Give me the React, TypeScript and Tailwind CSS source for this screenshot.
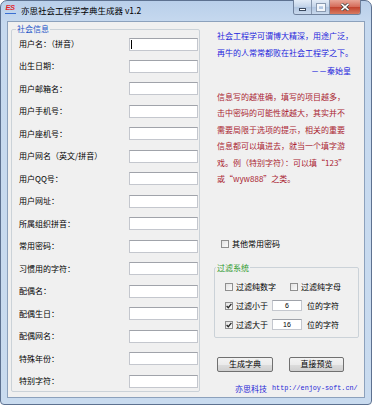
import React from "react";

const font = "font-['Noto_Sans_CJK_SC','Noto_Sans',sans-serif]";

function TextBox({ caret }: { caret?: boolean }) {
  return (
    <div className="relative h-[13px] w-[69px] shrink-0 bg-white border border-[#c4c7ce] border-t-[#a0a3aa]">
      {caret && <span className="absolute left-[1px] top-[1px] h-[9px] w-px bg-black" />}
    </div>
  );
}

function Check({ checked }: { checked?: boolean }) {
  return (
    <span className="flex h-[8px] w-[8px] shrink-0 items-center justify-center border border-[#8f8f8f] bg-[linear-gradient(135deg,#e2e2e2,#fbfbfb)]">
      {checked && (
        <svg width="6" height="6" viewBox="0 0 6 6">
          <path d="M0.6 3 L2.3 4.7 L5.4 0.9" stroke="#262626" strokeWidth="1.3" fill="none" />
        </svg>
      )}
    </span>
  );
}

const labels = [
  "用户名：（拼音）",
  "出生日期：",
  "用户邮箱名：",
  "用户手机号：",
  "用户座机号：",
  "用户网名（英文/拼音）",
  "用户QQ号：",
  "用户网址：",
  "所属组织拼音：",
  "常用密码：",
  "习惯用的字符：",
  "配偶名：",
  "配偶生日：",
  "配偶网名：",
  "特殊年份：",
  "特别字符：",
];

const redLines = [
  "信息写的越准确，填写的项目越多，",
  "击中密码的可能性就越大，其实并不",
  "需要局限于选项的提示，相关的重要",
  "信息都可以填进去，就当一个填字游",
  "戏。例（特别字符）：可以填“123”",
  "或“wyw888”之类。",
];

export default function App() {
  return (
    <div className="h-[405px] w-[372px] bg-white">
      <div
        className={`flex h-[405px] w-[372px] flex-col rounded-t-[7px] rounded-b-[4px] border border-[#5d7190] bg-[linear-gradient(180deg,#b9cfea_0px,#c6d9ef_22px,#c9dbef_100%)] ${font}`}
      >
        {/* Title bar */}
        <div className="flex h-[20px] shrink-0 items-start">
          <div className="ml-[3px] mt-[3px] flex h-[11px] w-[12px] flex-col items-center">
            <span className="text-[7.5px] font-bold italic leading-[8px] tracking-[-0.6px] text-[#e3262b] font-['Liberation_Sans',sans-serif]">
              ES
            </span>
            <span className="mt-[1px] h-px w-[11px] bg-[#3a6fd2]" />
          </div>
          <div className="ml-[5px] mt-[4px] text-[8.5px] leading-[11px] text-black">
            亦思社会工程学字典生成器 v1.2
          </div>
          <div className="ml-auto mr-[10px] -mt-px flex h-[15px] overflow-hidden rounded-b-[3px] border border-t-0 border-[#6f809b]">
            <div className="flex w-[18px] items-end justify-center border-r border-[#8696ae] bg-[linear-gradient(180deg,#e3ecf7,#c2d3e8_50%,#b0c5e0_51%,#c9d9ed)] pb-[3px]">
              <span className="h-[3px] w-[7px] border border-[#3b4a60] bg-white" />
            </div>
            <div className="flex w-[18px] items-center justify-center border-r border-[#8696ae] bg-[linear-gradient(180deg,#e3ecf7,#c2d3e8_50%,#b0c5e0_51%,#c9d9ed)]">
              <span className="h-[7px] w-[8px] border-2 border-white/80 outline outline-1 outline-[#8a9ab0]" />
            </div>
            <div className="flex w-[30px] items-center justify-center bg-[linear-gradient(180deg,#e8a697,#d46a58_50%,#c2422d_51%,#d77b62)]">
              <svg width="10" height="8" viewBox="0 0 10 8">
                <path d="M1.5 0.8 L8.5 7.2 M8.5 0.8 L1.5 7.2" stroke="#3a3a3a" strokeWidth="3" />
                <path d="M1.5 0.8 L8.5 7.2 M8.5 0.8 L1.5 7.2" stroke="#ffffff" strokeWidth="1.6" />
              </svg>
            </div>
          </div>
        </div>

        {/* Client area */}
        <div className="mx-[6px] mb-[6px] flex flex-1 border border-[#8ca1bc] bg-[#f0f0f0] text-[8px] text-black">
          {/* Left group */}
          <fieldset className="ml-[3px] mt-[2px] w-[189px] self-start rounded-[2px] border border-[#cbd2d8] pl-[7px] pr-[1px]">
            <legend className="-ml-[3px] px-[1px] text-[8px] leading-[10px] text-[#1f56c9]">
              社会信息
            </legend>
            <div className="flex flex-col gap-[2.47px]">
              {labels.map((l, i) => (
                <div key={l} className="flex h-[20px] items-center justify-between">
                  <span className="leading-none">{l}</span>
                  <TextBox caret={i === 0} />
                </div>
              ))}
            </div>
          </fieldset>

          {/* Right column */}
          <div className="flex flex-1 flex-col">
            <div className="ml-[17px] mt-[6px] text-[8px] leading-[16.5px] text-[#2424dc]">
              <div>社会工程学可谓博大精深，用途广泛，</div>
              <div>再牛的人常常都败在社会工程学之下。</div>
              <div className="mr-[13px] mt-[2px] text-right">－－秦始皇</div>
            </div>

            <div className="ml-[17px] mt-[9px] text-[8px] leading-[16.5px] text-[#aa2430]">
              {redLines.map((l) => (
                <div key={l} className="whitespace-nowrap">
                  {l}
                </div>
              ))}
            </div>

            <div className="ml-[21px] mt-[51px] flex h-[10px] items-center gap-[3px]">
              <Check />
              <span className="leading-none">其他常用密码</span>
            </div>

            <fieldset className="ml-[14px] mt-[14px] w-[145px] rounded-[2px] border border-[#cbd2d8] pb-[5px] pl-[10px] pt-[7px]">
              <legend className="-ml-[9px] px-[1px] text-[8px] leading-[10px] text-[#2e9a2e]">
                过滤系统
              </legend>
              <div className="flex flex-col gap-[5px]">
                <div className="flex h-[14px] items-center">
                  <div className="flex w-[65px] items-center gap-[3px]">
                    <Check />
                    <span className="leading-none">过滤纯数字</span>
                  </div>
                  <div className="flex items-center gap-[3px]">
                    <Check />
                    <span className="leading-none">过滤纯字母</span>
                  </div>
                </div>
                <div className="flex h-[14px] items-center">
                  <Check checked />
                  <span className="ml-[3px] leading-none">过滤小于</span>
                  <div className="ml-[4px] flex h-[11px] w-[30px] items-center justify-center border border-[#c4c7ce] border-t-[#a0a3aa] bg-white text-[7px] leading-none font-['Liberation_Sans',sans-serif]">
                    6
                  </div>
                  <span className="ml-[5px] leading-none">位的字符</span>
                </div>
                <div className="flex h-[14px] items-center">
                  <Check checked />
                  <span className="ml-[3px] leading-none">过滤大于</span>
                  <div className="ml-[4px] flex h-[11px] w-[30px] items-center justify-center border border-[#c4c7ce] border-t-[#a0a3aa] bg-white text-[7px] leading-none font-['Liberation_Sans',sans-serif]">
                    16
                  </div>
                  <span className="ml-[5px] leading-none">位的字符</span>
                </div>
              </div>
            </fieldset>

            <div className="mt-[19px] flex">
              <button className="ml-[17px] flex h-[15px] w-[56px] items-center justify-center rounded-[2px] border border-[#707070] bg-[linear-gradient(180deg,#f3f3f3_0%,#ebebeb_50%,#dddddd_51%,#cfcfcf_100%)] text-[8px] leading-none text-black">
                生成字典
              </button>
              <button className="ml-[16px] flex h-[15px] w-[55px] items-center justify-center rounded-[2px] border border-[#707070] bg-[linear-gradient(180deg,#f3f3f3_0%,#ebebeb_50%,#dddddd_51%,#cfcfcf_100%)] text-[8px] leading-none text-black">
                直接预览
              </button>
            </div>

            <div className="ml-[35px] mt-[12px] flex h-[10px] items-center whitespace-nowrap text-[#2626d6]">
              <span className="text-[8px] leading-none">亦思科技</span>
              <span className="ml-[5px] text-[6.8px] leading-none font-['Liberation_Mono',monospace]">
                http://enjoy-soft.cn/
              </span>
            </div>
          </div>
        </div>
      </div>
    </div>
  );
}
